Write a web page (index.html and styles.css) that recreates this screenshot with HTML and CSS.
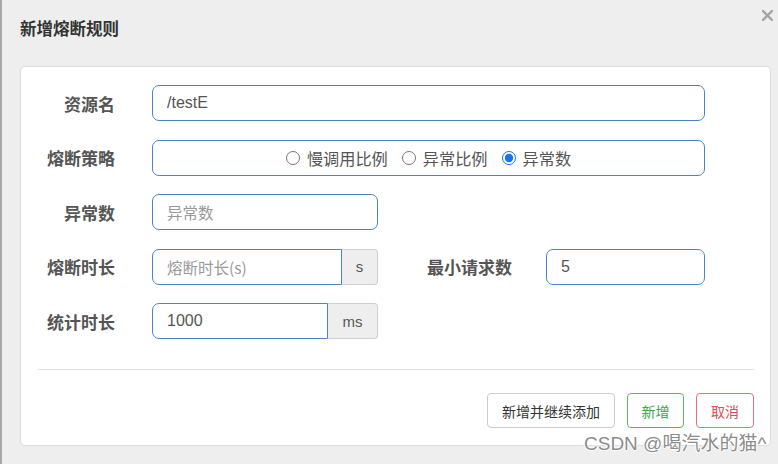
FILE: index.html
```html
<!DOCTYPE html>
<html lang="zh-CN">
<head>
<meta charset="utf-8">
<title>新增熔断规则</title>
<link rel="stylesheet" href="styles.css">
</head>
<body>
<div class="page">
  <div class="header">
    <h4 class="title">新增熔断规则</h4>
    <span class="close" aria-label="关闭">
      <svg width="11" height="11" viewBox="0 0 11 11"><path d="M1 1L10 10M10 1L1 10" stroke="#a3a3a3" stroke-width="2.4" stroke-linecap="square"/></svg>
    </span>
  </div>
  <div class="card">
    <div class="form">
      <div class="row">
        <label class="label">资源名</label>
        <div class="input w-full">/testE</div>
      </div>
      <div class="row">
        <label class="label">熔断策略</label>
        <div class="input w-full radios">
          <label class="radio"><input type="radio" name="s">慢调用比例</label>
          <label class="radio"><input type="radio" name="s">异常比例</label>
          <label class="radio"><input type="radio" name="s" checked>异常数</label>
        </div>
      </div>
      <div class="row">
        <label class="label">异常数</label>
        <div class="input w-mid placeholder">异常数</div>
      </div>
      <div class="row">
        <label class="label">熔断时长</label>
        <div class="group">
          <div class="input in-group w-s placeholder">熔断时长(s)</div>
          <span class="addon a-s">s</span>
        </div>
        <label class="label label-right">最小请求数</label>
        <div class="input w-small">5</div>
      </div>
      <div class="row last">
        <label class="label">统计时长</label>
        <div class="group">
          <div class="input in-group w-ms">1000</div>
          <span class="addon a-ms">ms</span>
        </div>
      </div>
    </div>
    <div class="divider"></div>
    <div class="footer">
      <button class="btn btn-default">新增并继续添加</button>
      <button class="btn btn-green">新增</button>
      <button class="btn btn-red">取消</button>
    </div>
  </div>
  <div class="csdn">CSDN @喝汽水的猫^</div>
</div>
</body>
</html>
```

FILE: styles.css
```css
* { box-sizing: border-box; }
html, body {
  margin: 0;
  padding: 0;
  background: #eeeeee;
  font-family: "Liberation Sans", "Noto Sans CJK SC", sans-serif;
}
.page {
  position: relative;
  width: 778px;
  height: 464px;
  border-left: 2px solid #a8a8a8;
  padding-left: 18px;
  overflow: hidden;
}
.header {
  display: flex;
  justify-content: space-between;
  align-items: flex-start;
  height: 66px;
  padding-right: 5px;
}
.title {
  margin: 17px 0 0 0;
  font-size: 16.5px;
  font-weight: bold;
  color: #333;
  line-height: 22px;
  font-family: "Noto Sans CJK SC", sans-serif;
}
.close {
  display: flex;
  margin-top: 10px;
}
.card {
  width: 751px;
  height: 380px;
  background: #fff;
  border: 1px solid #dcdcdc;
  border-radius: 5px;
  padding-top: 18px;
}
.form { display: flex; flex-direction: column; }
.row {
  display: flex;
  align-items: center;
  height: 36px;
  margin-bottom: 18.5px;
}
.row.last { margin-bottom: 0; }
.label {
  width: 94px;
  margin-right: 37px;
  text-align: right;
  font-family: "Noto Sans CJK SC", sans-serif;
  font-weight: bold;
  font-size: 17px;
  color: #555;
}
.label-right {
  width: 134px;
  margin-right: 34px;
}
.input {
  height: 36px;
  border: 1px solid #4a86c6;
  border-radius: 7px;
  padding: 0 14px;
  display: flex;
  align-items: center;
  font-size: 16px;
  color: #555;
  background: #fff;
}
.w-full { width: 553px; }
.w-mid { width: 226px; }
.w-small { width: 159px; }
.placeholder {
  color: #999;
  font-family: "Noto Sans CJK SC", sans-serif;
  font-size: 15.5px;
}
.group { display: flex; }
.in-group {
  border-top-right-radius: 0;
  border-bottom-right-radius: 0;
}
.w-s { width: 190px; }
.w-ms { width: 176px; }
.addon {
  height: 36px;
  display: flex;
  align-items: center;
  justify-content: center;
  background: #eeeeee;
  border: 1px solid #cfcfcf;
  border-left: 0;
  border-radius: 0 4px 4px 0;
  font-size: 15px;
  color: #555;
}
.a-s { width: 36px; }
.a-ms { width: 50px; }
.radios {
  justify-content: center;
  padding: 0;
  font-family: "Noto Sans CJK SC", sans-serif;
  font-size: 16.2px;
  color: #555;
}
.radio {
  display: flex;
  align-items: center;
  margin-right: 14px;
}
.radio:last-child { margin-right: 0; }
.radio input {
  width: 14px;
  height: 14px;
  margin: 0 7px 0 0;
  accent-color: #1a73e8;
}
.divider {
  margin: 30px 0 0 17px;
  width: 716px;
  height: 1px;
  background: #e3e3e3;
}
.footer {
  display: flex;
  justify-content: flex-end;
  gap: 12px;
  margin-top: 23px;
  padding-right: 16px;
}
.btn {
  height: 35px;
  background: #fff;
  border: 1px solid #ccc;
  border-radius: 4px;
  font-family: "Noto Sans CJK SC", sans-serif;
  font-size: 14px;
  padding: 0;
  display: flex;
  align-items: center;
  justify-content: center;
}
.btn-default { width: 128px; color: #333; }
.btn-green { width: 57px; color: #3aa74a; border-color: #5cb85c; }
.btn-red { width: 58px; color: #e2495a; border-color: #e6707c; }
.csdn {
  position: absolute;
  left: 582px;
  top: 431px;
  font-size: 19px;
  line-height: 26px;
  color: #8c8c8c;
  font-family: "Liberation Sans", "Noto Sans CJK SC", sans-serif;
  text-shadow: 1px 0 #fff, -1px 0 #fff, 0 1px #fff, 0 -1px #fff;
  white-space: nowrap;
}
```
